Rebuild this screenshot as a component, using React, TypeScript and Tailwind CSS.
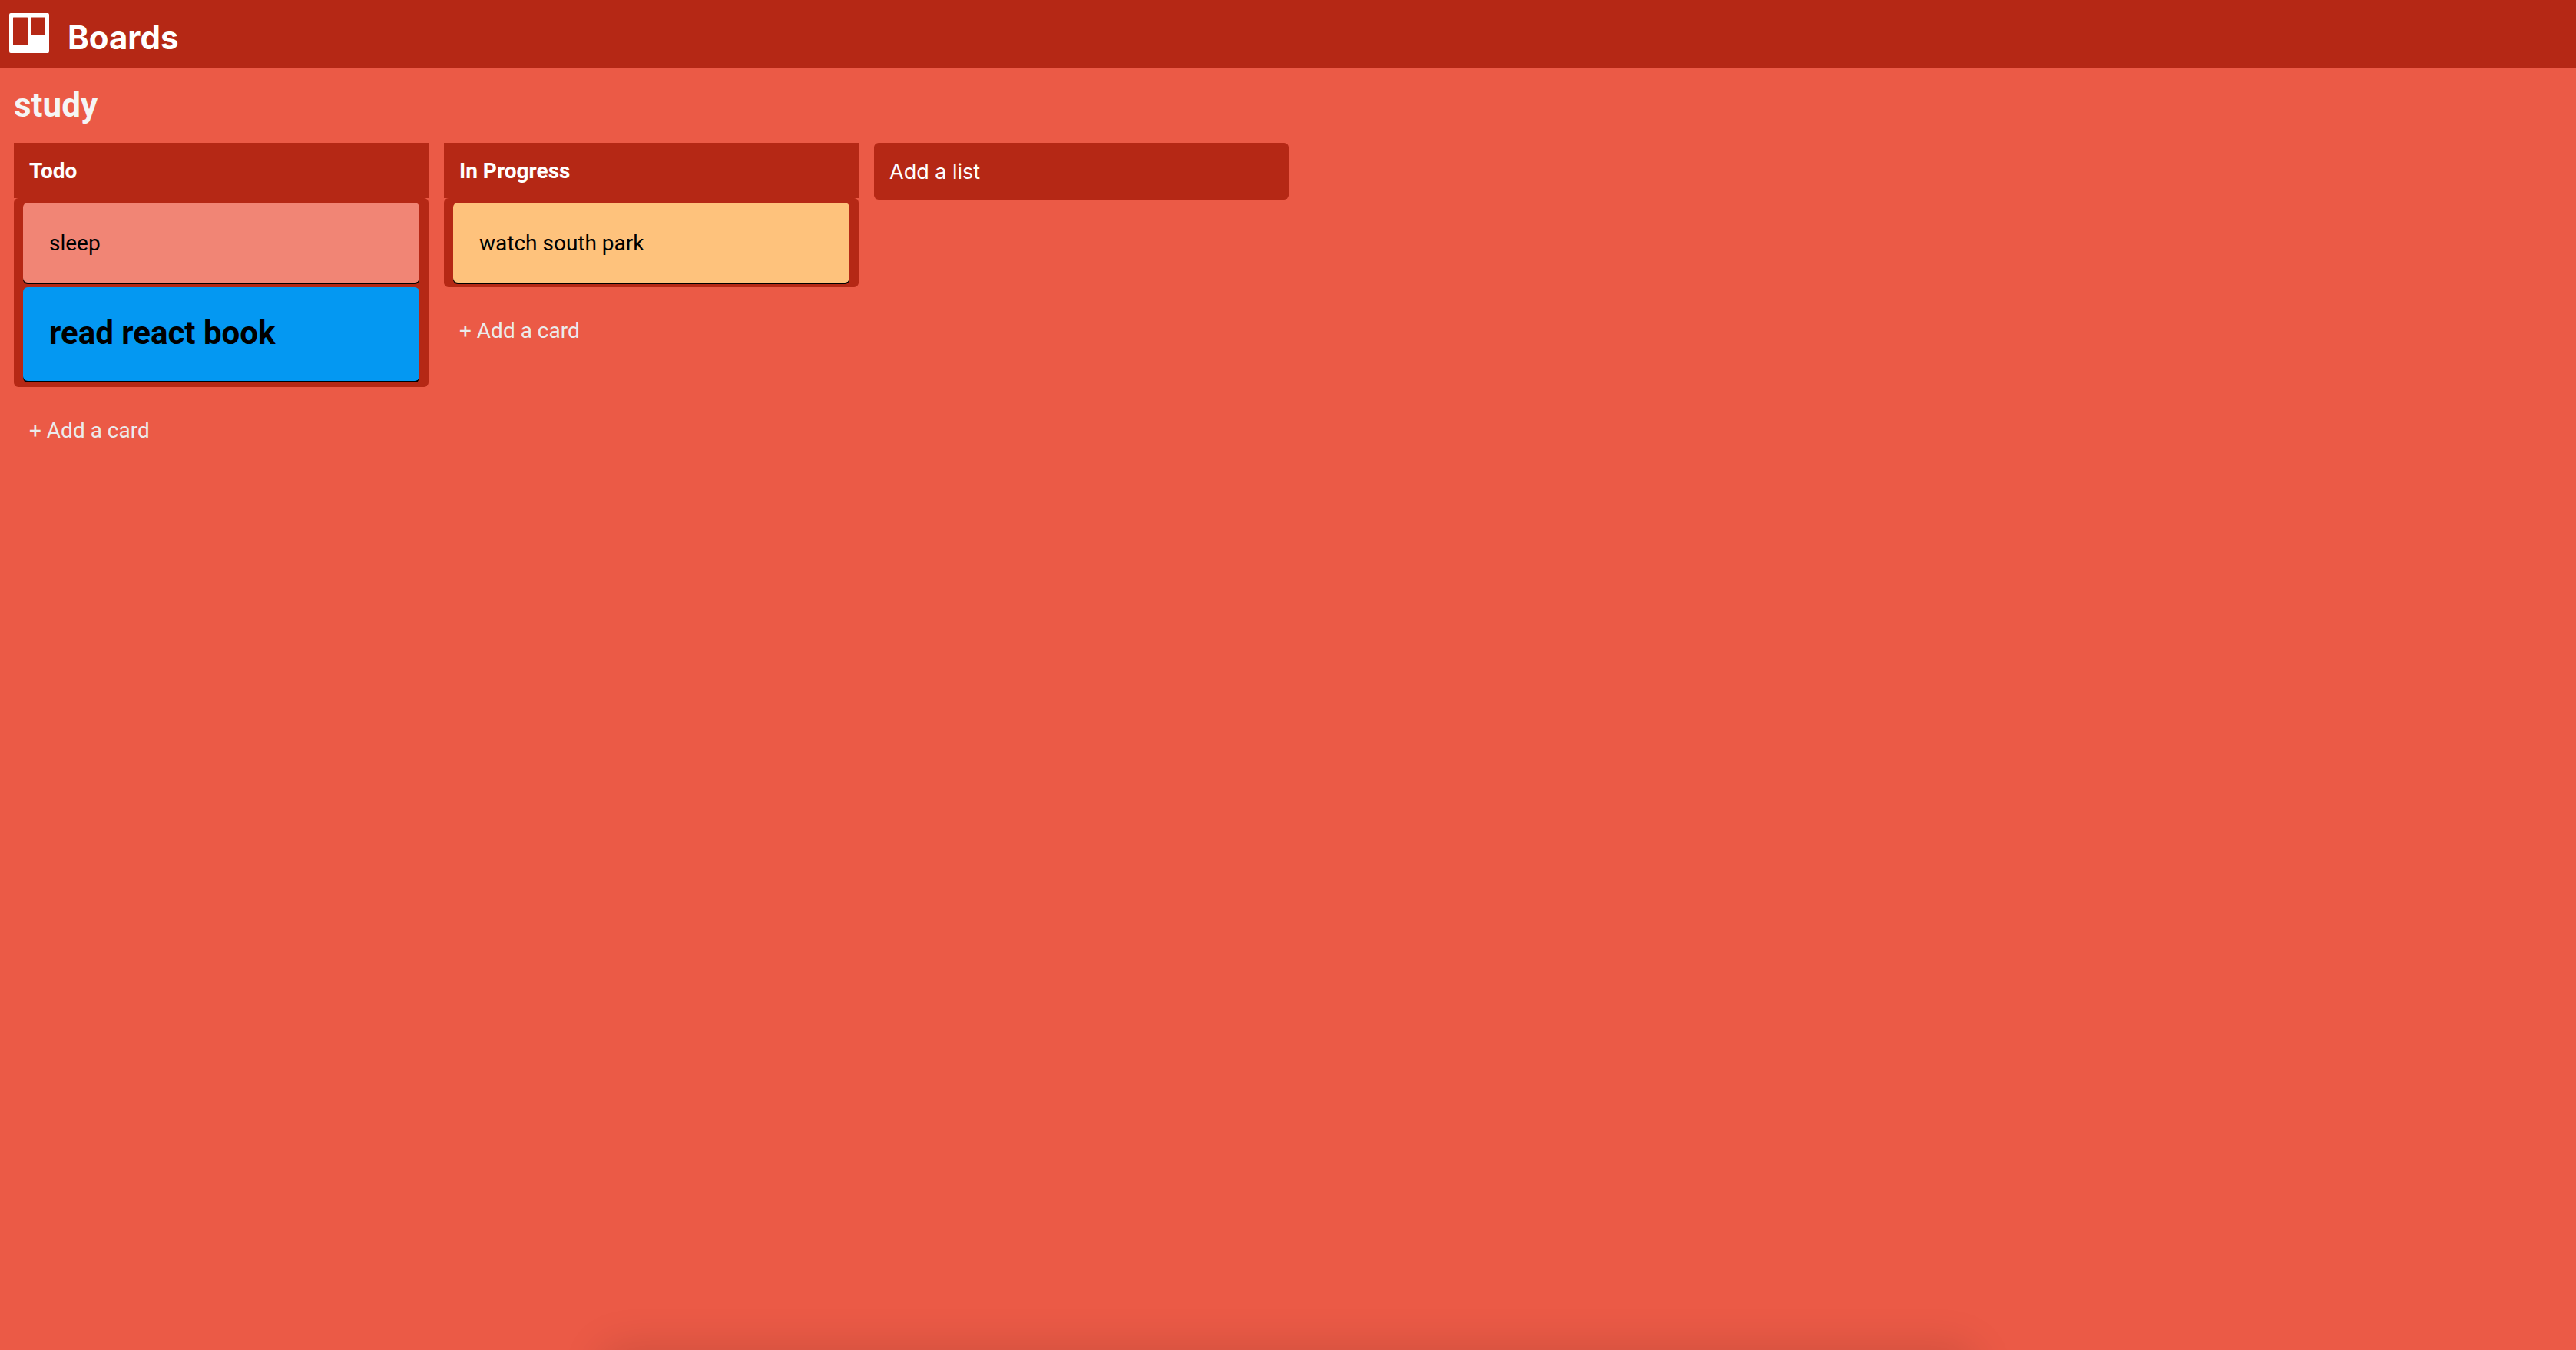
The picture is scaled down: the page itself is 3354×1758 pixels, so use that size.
type Card = { text: string; color: string; large?: boolean };
type List = { title: string; cards: Card[] };

const lists: List[] = [
  {
    title: 'Todo',
    cards: [
      { text: 'sleep', color: 'bg-[#f18575]' },
      { text: 'read react book', color: 'bg-[#0498f2]', large: true },
    ],
  },
  { title: 'In Progress', cards: [{ text: 'watch south park', color: 'bg-[#fec27c]' }] },
];

function BoardIcon() {
  return (
    <svg viewBox="0 0 52 52" className="mb-0.5 size-[52px]" fill="currentColor" aria-hidden="true">
      <path
        fillRule="evenodd"
        d="M2 0h48a2 2 0 0 1 2 2v48a2 2 0 0 1-2 2H2a2 2 0 0 1-2-2V2a2 2 0 0 1 2-2zM5.500 5.500a.5.5 0 0 0-.5.5v35.500a.5.5 0 0 0 .5.5h18a.5.5 0 0 0 .5-.5V6a.5.5 0 0 0-.5-.5zM28.500 5.500a.5.5 0 0 0-.5.5v22.500a.5.5 0 0 0 .5.5h17.500a.5.5 0 0 0 .5-.5V6a.5.5 0 0 0-.5-.5z"
      />
    </svg>
  );
}

function CardItem({ card }: { card: Card }) {
  return (
    <li
      className={`rounded-md px-[34px] text-black shadow-[0_2px_0_#000] ${card.color} ${
        card.large ? 'mb-0.5 pt-[35px] pb-[37px]' : 'pt-[37px] pb-[35px]'
      }`}
    >
      {card.large ? (
        <h3 className="text-[42px] leading-[50px] font-bold">{card.text}</h3>
      ) : (
        <p className="text-[28px] leading-8">{card.text}</p>
      )}
    </li>
  );
}

function ListColumn({ list }: { list: List }) {
  return (
    <section className="w-[540px] shrink-0">
      <h2 className="bg-[#b52815] px-5 pt-[21px] pb-[19px] text-[28px] leading-8 font-bold text-white">
        {list.title}
      </h2>
      <ul className="flex flex-col gap-1.5 rounded-md bg-[#b52815] px-3 py-1.5">
        {list.cards.map((card) => (
          <CardItem key={card.text} card={card} />
        ))}
      </ul>
      <button type="button" className="mt-[41px] block px-5 text-[28px] leading-8 text-[#ebebeb]">
        + Add a card
      </button>
    </section>
  );
}

export default function App() {
  return (
    <div className="relative min-h-screen overflow-hidden bg-[#eb5a46] font-[Roboto,sans-serif]">
      <header className="flex h-22 items-center bg-[#b52815] px-3 text-white">
        <a href="#boards" className="flex items-center gap-6">
          <BoardIcon />
          <span className="pt-2.5 font-[Inter,sans-serif] text-[42px] leading-[50px] font-bold">Boards</span>
        </a>
      </header>
      <main className="px-[18px] pt-6">
        <h1 className="text-[44px] leading-[50px] font-bold text-[#f5f5f5]">study</h1>
        <div className="mt-6 flex items-start gap-5">
          {lists.map((list) => (
            <ListColumn key={list.title} list={list} />
          ))}
          <button
            type="button"
            className="w-[540px] shrink-0 rounded-md bg-[#b52815] px-5 pt-[21px] pb-[19px] text-left font-[Inter,sans-serif] text-[27px] leading-[34px] text-white"
          >
            Add a list
          </button>
        </div>
      </main>
      <div className="pointer-events-none absolute top-full left-1/2 h-40 w-[1780px] -translate-x-1/2 rounded-xl shadow-[0_0_60px_rgba(0,0,0,0.14)]" />
    </div>
  );
}
